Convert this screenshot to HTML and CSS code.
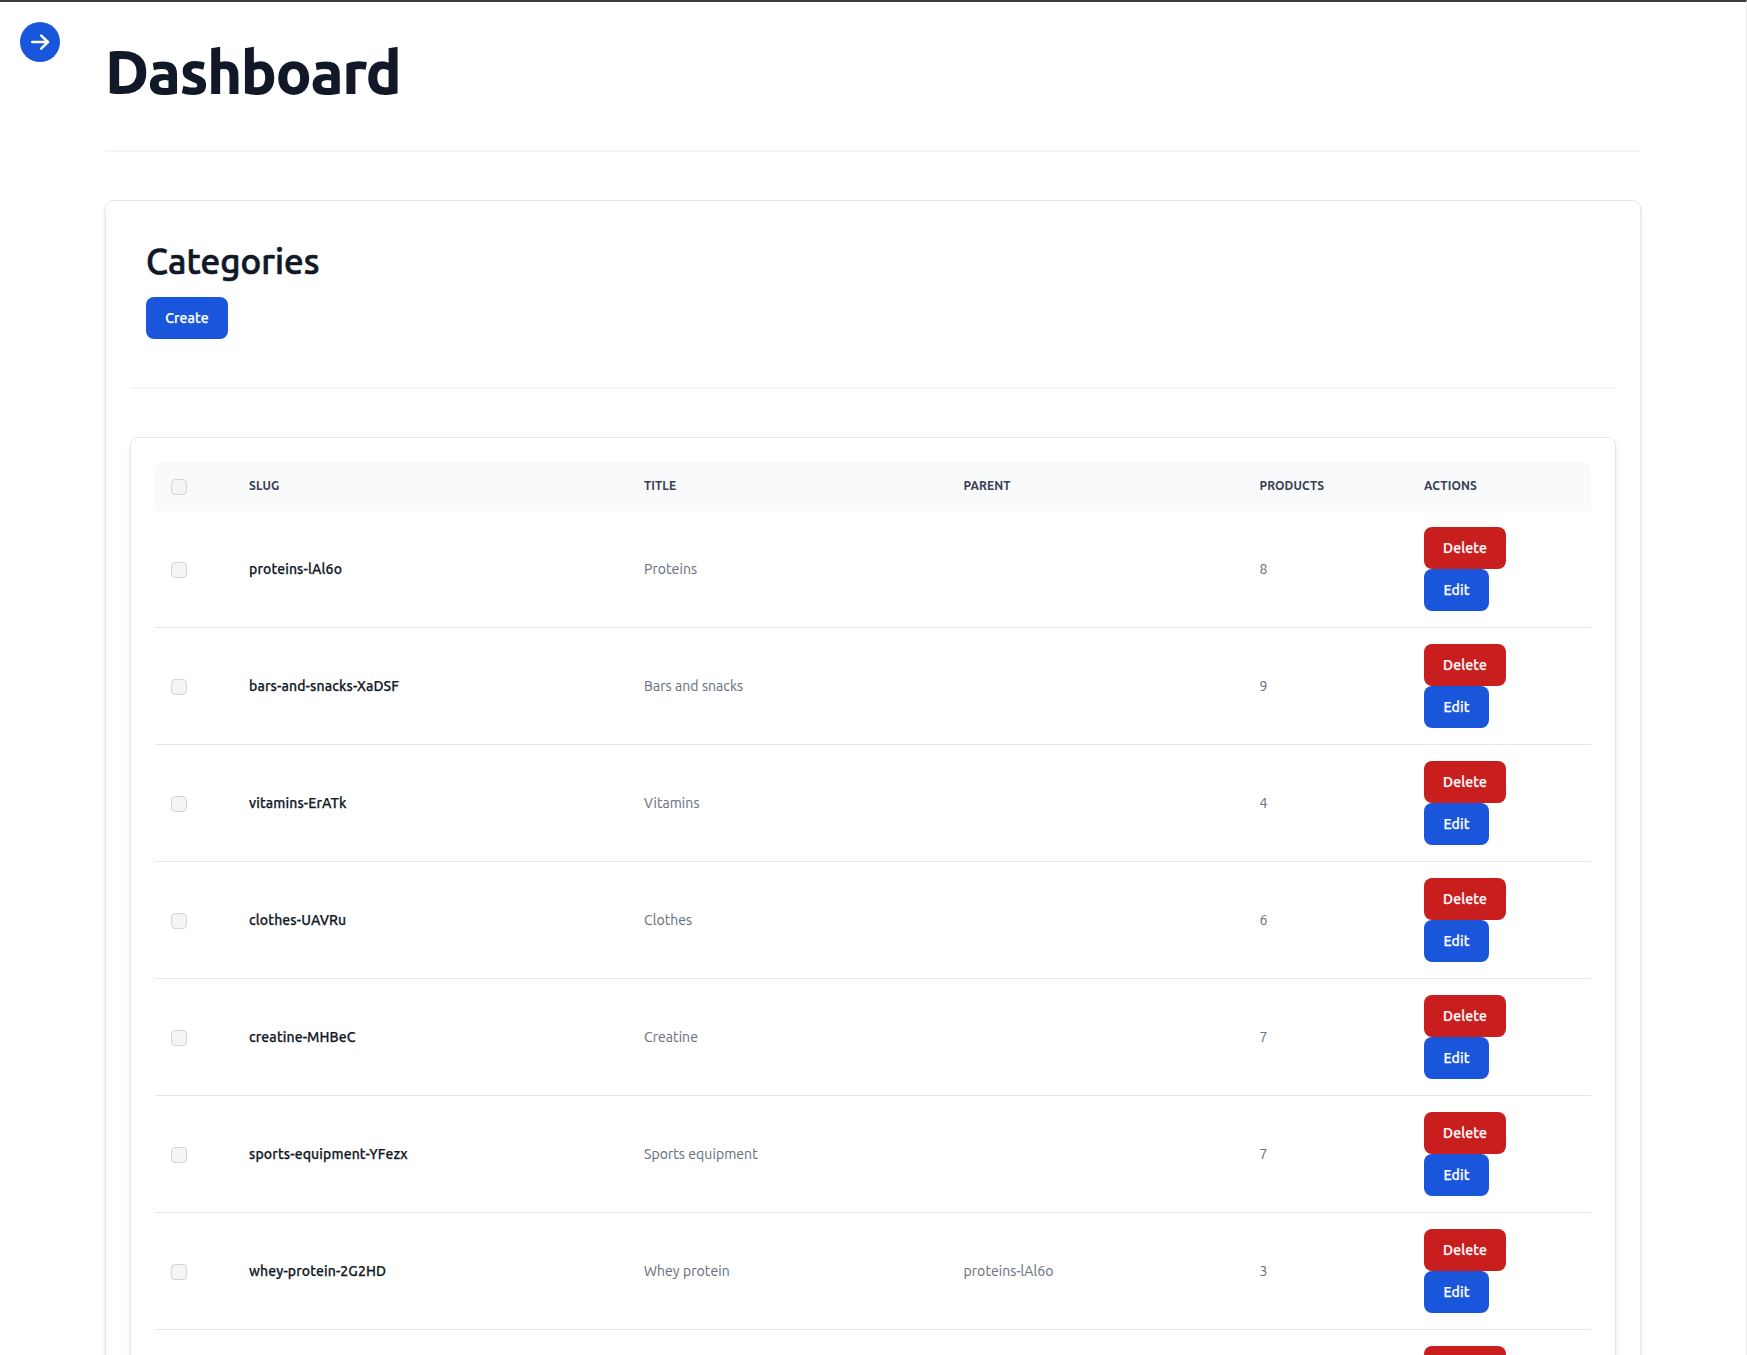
FILE: index.html
```html
<!DOCTYPE html>
<html lang="en">
<head>
<meta charset="utf-8">
<title>Dashboard</title>
<link rel="stylesheet" href="styles.css">
</head>
<body>
<button class="menu-toggle" aria-label="Open menu">
  <svg width="20" height="20" viewBox="0 0 20 20" fill="none" stroke="#fff" stroke-width="2.5" stroke-linecap="round" stroke-linejoin="round"><path d="M2.2 10H18M11.2 3.6L18 10L11.2 16.6"/></svg>
</button>
<main class="page">
  <h1 class="page-title">Dashboard</h1>
  <hr class="divider">
  <section class="card">
    <div class="card-head">
      <h2 class="section-title">Categories</h2>
      <button class="btn btn-primary">Create</button>
    </div>
    <hr class="divider">
    <div class="card table-card">
      <table class="table">
        <colgroup><col class="col-check"><col class="col-slug"><col class="col-title"><col class="col-parent"><col class="col-products"><col class="col-actions"></colgroup>
        <thead>
          <tr><th><input type="checkbox" class="check"></th><th>Slug</th><th>Title</th><th>Parent</th><th>Products</th><th>Actions</th></tr>
        </thead>
        <tbody>
          <tr><td><input type="checkbox" class="check"></td><td class="slug">proteins-lAl6o</td><td>Proteins</td><td></td><td>8</td><td><div class="actions"><button class="btn btn-danger">Delete</button><button class="btn btn-primary">Edit</button></div></td></tr>
          <tr><td><input type="checkbox" class="check"></td><td class="slug">bars-and-snacks-XaDSF</td><td>Bars and snacks</td><td></td><td>9</td><td><div class="actions"><button class="btn btn-danger">Delete</button><button class="btn btn-primary">Edit</button></div></td></tr>
          <tr><td><input type="checkbox" class="check"></td><td class="slug">vitamins-ErATk</td><td>Vitamins</td><td></td><td>4</td><td><div class="actions"><button class="btn btn-danger">Delete</button><button class="btn btn-primary">Edit</button></div></td></tr>
          <tr><td><input type="checkbox" class="check"></td><td class="slug">clothes-UAVRu</td><td>Clothes</td><td></td><td>6</td><td><div class="actions"><button class="btn btn-danger">Delete</button><button class="btn btn-primary">Edit</button></div></td></tr>
          <tr><td><input type="checkbox" class="check"></td><td class="slug">creatine-MHBeC</td><td>Creatine</td><td></td><td>7</td><td><div class="actions"><button class="btn btn-danger">Delete</button><button class="btn btn-primary">Edit</button></div></td></tr>
          <tr><td><input type="checkbox" class="check"></td><td class="slug">sports-equipment-YFezx</td><td>Sports equipment</td><td></td><td>7</td><td><div class="actions"><button class="btn btn-danger">Delete</button><button class="btn btn-primary">Edit</button></div></td></tr>
          <tr><td><input type="checkbox" class="check"></td><td class="slug">whey-protein-2G2HD</td><td>Whey protein</td><td>proteins-lAl6o</td><td>3</td><td><div class="actions"><button class="btn btn-danger">Delete</button><button class="btn btn-primary">Edit</button></div></td></tr>
          <tr><td></td><td></td><td></td><td></td><td></td><td><div class="actions"><button class="btn btn-danger" aria-label="Delete"></button></div></td></tr>
        </tbody>
      </table>
    </div>
  </section>
</main>
</body>
</html>
```
FILE: styles.css
```css
* { box-sizing: border-box; margin: 0; }

html { height: 1355px; overflow: hidden; }

body {
  height: 1355px;
  overflow: hidden;
  border-top: 2px solid #3d3b3c;
  border-right: 1px solid #ececee;
  background: #fff;
  color: #111827;
  font-family: Ubuntu, "Noto Sans", sans-serif;
  font-size: 14px;
  line-height: 20px;
}

.menu-toggle {
  position: absolute;
  left: 20px;
  top: 22px;
  width: 40px;
  height: 40px;
  padding: 0;
  border: 0;
  border-radius: 50%;
  background: #1a56db;
  display: flex;
  align-items: center;
  justify-content: center;
}

.page { width: 1536px; margin-left: 105px; }

.page-title {
  height: 100px;
  padding-top: 40px;
  font-size: 60px;
  line-height: 60px;
  font-weight: 800;
  letter-spacing: -1.5px;
}

.divider { height: 2px; border: 0; margin: 48px 0; background: #f5f5f6; }

.card {
  padding: 24px;
  border: 1px solid #e5e7eb;
  border-radius: 8px;
  box-shadow: 0 4px 6px -1px rgba(0, 0, 0, .1), 0 2px 4px -2px rgba(0, 0, 0, .1);
}

.card-head {
  height: 114px;
  padding: 16px 16px 0;
}

.section-title {
  font-size: 35px;
  line-height: 40px;
  font-weight: 500;
  -webkit-text-stroke: .7px currentColor;
  margin-bottom: 16px;
}

.btn {
  display: block;
  height: 42px;
  padding: 0 19px;
  border: 0;
  border-radius: 8px;
  color: #fff;
  font: 500 14px/20px Ubuntu, "Noto Sans", sans-serif;
  letter-spacing: .1px;
  -webkit-text-stroke: .25px currentColor;
}
.btn-primary { background: #1a56db; }
.btn-danger { background: #c81e1e; width: 82px; }
.card-head .btn { width: 82px; }
.actions { height: 84px; }
.actions .btn-primary { width: 65px; }

.table { width: 1436px; table-layout: fixed; border-collapse: separate; border-spacing: 0; text-align: left; }
.col-check { width: 78px; }
.col-slug { width: 395px; }
.col-title { width: 319.5px; }
.col-parent { width: 296px; }
.col-products { width: 164.5px; }
.col-actions { width: 183px; }

th {
  height: 49px;
  padding: 0 16px 2px;
  background: #f9fafb;
  color: #374151;
  font-size: 12px;
  line-height: 16px;
  font-weight: 700;
  letter-spacing: .12px;
  text-transform: uppercase;
}
th:first-child { border-top-left-radius: 8px; padding: 1px 16px 0; }
th:last-child { border-top-right-radius: 8px; }
td { height: 117px; padding: 16px; border-bottom: 1px solid #e5e7eb; color: #6b7280; letter-spacing: .07px; -webkit-text-stroke: .1px currentColor; }
td:first-child { padding-top: 18px; }
.slug { color: #111827; font-weight: 500; letter-spacing: .13px; -webkit-text-stroke: .25px currentColor; }

.check {
  display: block;
  appearance: none;
  width: 16px;
  height: 16px;
  border: 1px solid #d1d5db;
  border-radius: 4px;
  background: #f3f4f6;
}
```
